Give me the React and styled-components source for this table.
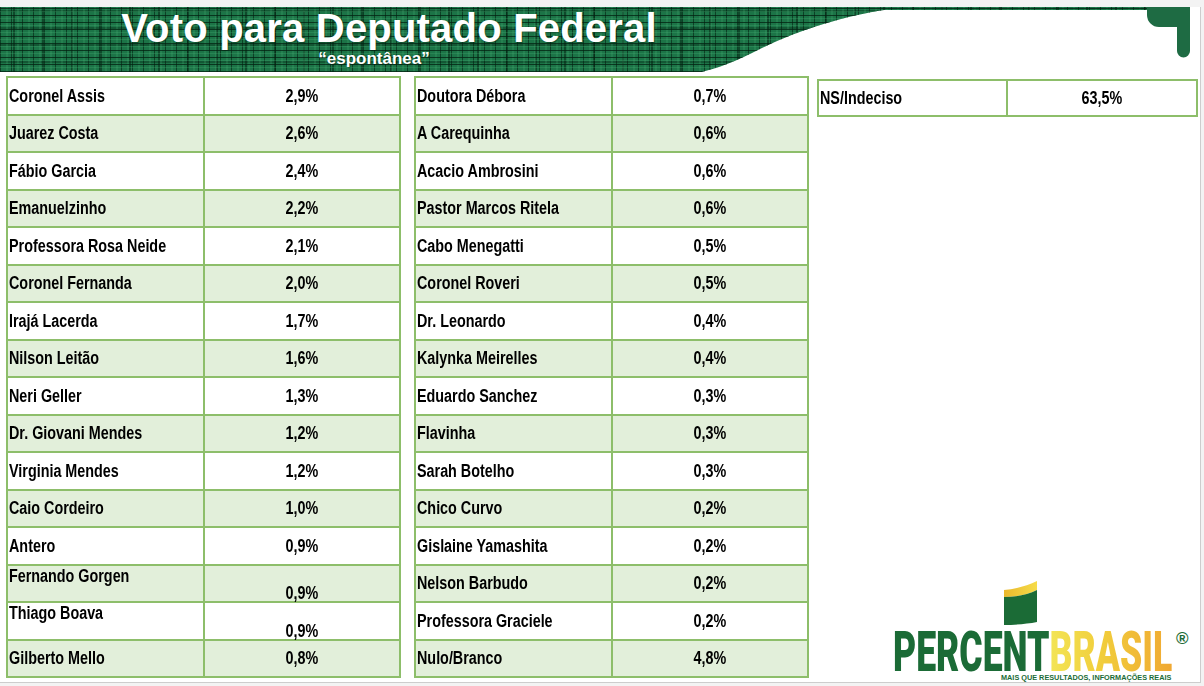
import React, { useLayoutEffect, useRef, useState } from 'react';
import styled, { createGlobalStyle } from 'styled-components';

const GREEN_LINE = '#8dbe6a';
const SHADE = '#e2efda';
const BRAND_GREEN = '#1b6b36';

const GlobalStyle = createGlobalStyle`
  html, body { margin: 0; padding: 0; background: #f3f3f3; }
  body { font-family: "Liberation Sans", Arial, sans-serif; }
  * { box-sizing: border-box; }
`;

const Page = styled.div`
  width: 1204px;
  height: 686px;
  padding-top: 7px;
  overflow: hidden;
`;

const Slide = styled.div`
  position: relative;
  width: 1201px;
  height: 676px;
  background: #fff;
  border-right: 1px solid #cdcdcd;
  border-bottom: 1px solid #cdcdcd;
  display: flex;
  flex-direction: column;
`;

const Header = styled.header`
  position: relative;
  flex: none;
  height: 65px;
  &::before {
    content: '';
    position: absolute;
    inset: 0;
    background-color: #1c7447;
    background-image:
      repeating-linear-gradient(0deg, rgba(2, 32, 16, 0.75) 0 1px, transparent 1px 4px, rgba(70, 175, 115, 0.28) 4px 5px, transparent 5px 7px),
      repeating-linear-gradient(90deg, rgba(2, 32, 16, 0.6) 0 1px, transparent 1px 6px, rgba(70, 175, 115, 0.22) 6px 8px, transparent 8px 11px),
      repeating-linear-gradient(90deg, transparent 0 13px, rgba(2, 32, 16, 0.5) 13px 15px, transparent 15px 29px),
      repeating-linear-gradient(0deg, transparent 0 9px, rgba(2, 32, 16, 0.35) 9px 11px, transparent 11px 17px);
    clip-path: path('M0 0 H1150 V3 H884 C850 8 800 22 760 42 C735 55 718 61 698 66 H0 Z');
  }
`;

const TitleBlock = styled.div`
  position: relative;
  width: 778px;
  display: flex;
  flex-direction: column;
  align-items: center;
  color: #fff;
  font-weight: bold;
`;

const Title = styled.h1`
  margin: 1px 0 0;
  font: bold 40px/40px "Liberation Sans", Arial, sans-serif;
  letter-spacing: 0.2px;
  text-shadow: 1px 1px 1px rgba(0, 30, 15, 0.45);
`;

const Subtitle = styled.div`
  margin: 2px 30px 0 0;
  font: bold 17px/17px "Liberation Sans", Arial, sans-serif;
  text-shadow: 1px 1px 1px rgba(0, 30, 15, 0.45);
`;

const Corner = styled.svg`
  position: absolute;
  top: 0;
  left: 1147px;
`;

const Main = styled.main`
  flex: 1;
  display: flex;
  align-items: stretch;
  padding: 4px 0 0 6px;
`;

const Table = styled.div`
  align-self: flex-start;
  flex: none;
  width: ${(p) => p.$w}px;
  margin-left: ${(p) => p.$ml || 0}px;
  margin-top: ${(p) => p.$mt || 0}px;
  border: 2px solid ${GREEN_LINE};
`;

const Row = styled.div`
  box-sizing: content-box;
  display: grid;
  grid-template-columns: ${(p) => p.$cols};
  height: ${(p) => p.$h}px;
  background: ${(p) => (p.$shade ? SHADE : '#fff')};
  & + & {
    border-top: 2px solid ${GREEN_LINE};
  }
`;

const Cell = styled.div`
  display: flex;
  align-items: ${(p) => p.$v || 'center'};
  justify-content: ${(p) => (p.$center ? 'center' : 'flex-start')};
  padding-left: ${(p) => (p.$center ? 0 : 1)}px;
  border-right: ${(p) => (p.$divider ? `2px solid ${GREEN_LINE}` : 'none')};
  font: bold 17.5px/20px "Liberation Sans", Arial, sans-serif;
  color: #000;
  white-space: nowrap;
  min-width: 0;
`;

/* Arial Narrow look: Liberation Sans Bold compressed horizontally */
const CellText = styled.span`
  display: inline-block;
  transform: scaleX(0.82);
  transform-origin: ${(p) => (p.$center ? 'center' : 'left')} center;
  margin-bottom: ${(p) => p.$mb || 0}px;
`;

const RightCol = styled.div`
  flex: none;
  width: 381px;
  margin-left: 8px;
  display: flex;
  flex-direction: column;
  justify-content: space-between;
`;

const Logo = styled.div`
  display: flex;
  flex-direction: column;
  align-items: flex-start;
  padding-left: 76px;
`;

const LogoMark = styled.svg`
  margin-left: 110px;
  margin-bottom: 4px;
  display: block;
`;

const Wordmark = styled.div`
  position: relative;
  height: 44px;
  width: 279px;
  white-space: nowrap;
`;

const WordInner = styled.span`
  display: inline-block;
  transform-origin: left center;
  font: 900 56px/44px "Roboto", "Liberation Sans", Arial, sans-serif;
  letter-spacing: 0;
`;

const Percent = styled.span`
  color: ${BRAND_GREEN};
`;

const Brasil = styled.span`
  background: linear-gradient(90deg, #f3e556 0%, #f1cf3c 40%, #f0a832 100%);
  -webkit-background-clip: text;
  background-clip: text;
  color: transparent;
`;

const Registered = styled.span`
  position: absolute;
  left: 283px;
  top: 0;
  font: bold 17px/17px "Liberation Sans", Arial, sans-serif;
  color: ${BRAND_GREEN};
`;

const Tagline = styled.div`
  margin: 0 0 0 108px;
  font: bold 7.3px/8px "Liberation Sans", Arial, sans-serif;
  color: ${BRAND_GREEN};
  white-space: nowrap;
`;

const left = [
  ['Coronel Assis', '2,9%'],
  ['Juarez Costa', '2,6%'],
  ['Fábio Garcia', '2,4%'],
  ['Emanuelzinho', '2,2%'],
  ['Professora Rosa Neide', '2,1%'],
  ['Coronel Fernanda', '2,0%'],
  ['Irajá Lacerda', '1,7%'],
  ['Nilson Leitão', '1,6%'],
  ['Neri Geller', '1,3%'],
  ['Dr. Giovani Mendes', '1,2%'],
  ['Virginia Mendes', '1,2%'],
  ['Caio Cordeiro', '1,0%'],
  ['Antero', '0,9%'],
  ['Fernando Gorgen', '0,9%', true],
  ['Thiago Boava', '0,9%', true],
  ['Gilberto Mello', '0,8%'],
];

const middle = [
  ['Doutora Débora', '0,7%'],
  ['A Carequinha', '0,6%'],
  ['Acacio Ambrosini', '0,6%'],
  ['Pastor Marcos Ritela', '0,6%'],
  ['Cabo Menegatti', '0,5%'],
  ['Coronel Roveri', '0,5%'],
  ['Dr. Leonardo', '0,4%'],
  ['Kalynka Meirelles', '0,4%'],
  ['Eduardo Sanchez', '0,3%'],
  ['Flavinha', '0,3%'],
  ['Sarah Botelho', '0,3%'],
  ['Chico Curvo', '0,2%'],
  ['Gislaine Yamashita', '0,2%'],
  ['Nelson Barbudo', '0,2%'],
  ['Professora Graciele', '0,2%'],
  ['Nulo/Branco', '4,8%'],
];

function ResultTable({ rows, w, ml, mt, cols, h }) {
  return (
    <Table $w={w} $ml={ml} $mt={mt}>
      {rows.map(([name, value, split], i) => (
        <Row key={name} $cols={cols} $h={h} $shade={i % 2 === 1}>
          <Cell $divider $v={split ? 'flex-start' : 'center'}>
            <CellText>{name}</CellText>
          </Cell>
          <Cell $center $v={split ? 'flex-end' : 'center'}>
            <CellText $center $mb={split ? -2 : 0}>{value}</CellText>
          </Cell>
        </Row>
      ))}
    </Table>
  );
}

function BrandWordmark() {
  const ref = useRef(null);
  const [scale, setScale] = useState(0.6);
  useLayoutEffect(() => {
    if (ref.current) {
      const w = ref.current.scrollWidth;
      if (w) setScale(279 / w);
    }
  }, []);
  return (
    <Wordmark>
      <WordInner ref={ref} style={{ transform: `scaleX(${scale})` }}>
        <Percent>PERCENT</Percent>
        <Brasil>BRASIL</Brasil>
      </WordInner>
      <Registered>®</Registered>
    </Wordmark>
  );
}

export default function App() {
  return (
    <>
      <GlobalStyle />
      <Page>
        <Slide>
          <Header>
            <TitleBlock>
              <Title>Voto para Deputado Federal</Title>
              <Subtitle>“espontânea”</Subtitle>
            </TitleBlock>
            <Corner width="44" height="51" viewBox="0 0 44 51">
              <path d="M0 0 H43 V44 A6.5 6.5 0 0 1 30 44 V20 H12 A12 12 0 0 1 0 8 Z" fill="#1e6b43" />
            </Corner>
          </Header>
          <Main>
            <ResultTable rows={left} w={395} cols="197px 1fr" h={35.5} />
            <ResultTable rows={middle} w={395} ml={13} cols="197px 1fr" h={35.5} />
            <RightCol>
              <ResultTable rows={[['NS/Indeciso', '63,5%']]} w={381} mt={3} cols="189px 1fr" h={34} />
              <Logo>
                <LogoMark width="35" height="46" viewBox="0 0 35 46">
                  <defs>
                    <linearGradient id="flagY" x1="0" y1="0" x2="1" y2="0">
                      <stop offset="0" stopColor="#e9b82c" />
                      <stop offset="1" stopColor="#f6dc4a" />
                    </linearGradient>
                  </defs>
                  <path d="M1 10 C12 9 24 6 34 1 V10 C24 15 12 17 1 17 Z" fill="url(#flagY)" />
                  <path d="M1 17 C12 17 24 15 34 10 V42 C24 44 12 45 1 45 Z" fill="#1b6b36" />
                </LogoMark>
                <BrandWordmark />
                <Tagline>MAIS QUE RESULTADOS, INFORMAÇÕES REAIS</Tagline>
              </Logo>
            </RightCol>
          </Main>
        </Slide>
      </Page>
    </>
  );
}
